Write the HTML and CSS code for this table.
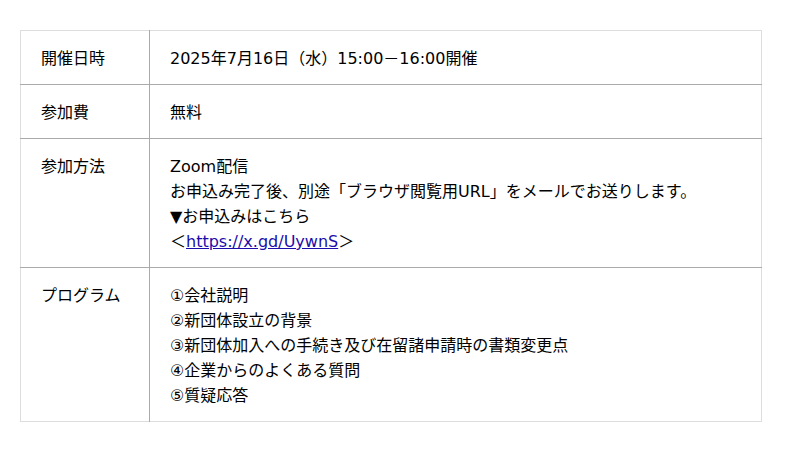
FILE: index.html
```html
<!DOCTYPE html>
<html lang="ja">
<head>
<meta charset="utf-8">
<link rel="stylesheet" href="styles.css">
</head>
<body>
<div class="page">
  <table class="info">
    <tr>
      <th>開催日時</th>
      <td>2025年7月16日（水）15:00－16:00開催</td>
    </tr>
    <tr>
      <th>参加費</th>
      <td>無料</td>
    </tr>
    <tr>
      <th>参加方法</th>
      <td>Zoom配信<br>お申込み完了後、別途「ブラウザ閲覧用URL」をメールでお送りします。<br>▼お申込みはこちら<br>＜<a href="#">https://x.gd/UywnS</a>＞</td>
    </tr>
    <tr>
      <th>プログラム</th>
      <td>①会社説明<br>②新団体設立の背景<br>③新団体加入への手続き及び在留諸申請時の書類変更点<br>④企業からのよくある質問<br>⑤質疑応答</td>
    </tr>
  </table>
</div>
</body>
</html>
```
FILE: styles.css
```css
html, body {
  margin: 0;
  padding: 0;
  background: #fff;
}
.page {
  padding: 30px 38px 0 20px;
}
.info {
  width: 742px;
  border-collapse: collapse;
  border: 1px solid #ddd;
  font-family: "DejaVu Sans", "Noto Sans CJK JP", sans-serif;
  font-size: 16px;
  line-height: 25px;
  color: #000;
}
.info th, .info td {
  text-align: left;
  vertical-align: top;
  font-weight: normal;
  padding: 15px 20px 13px;
}
.info th {
  width: 88px;
  border-right: 1px solid #aaa;
}
.info tr + tr th, .info tr + tr td {
  border-top: 1px solid #aaa;
}
.info a {
  color: #1a0dab;
  text-decoration: underline;
}
```
